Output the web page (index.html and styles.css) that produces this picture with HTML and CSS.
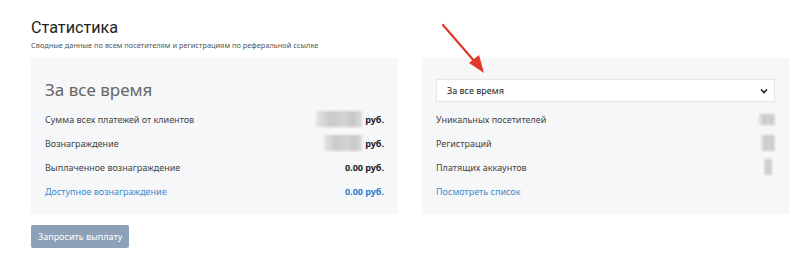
FILE: index.html
```html
<!DOCTYPE html>
<html lang="ru">
<head>
<meta charset="utf-8">
<link rel="stylesheet" href="styles.css">
</head>
<body>
<div class="page">
  <header class="head">
    <h1 class="title">Статистика</h1>
    <p class="subtitle">Сводные данные по всем посетителям и регистрациям по реферальной ссылке</p>
  </header>
  <div class="cards">
    <section class="card">
      <h2 class="card-title">За все время</h2>
      <div class="rows">
        <div class="row"><span>Сумма всех платежей от клиентов</span><span class="val"><i class="blur b1"></i>руб.</span></div>
        <div class="row"><span>Вознаграждение</span><span class="val"><i class="blur b2"></i>руб.</span></div>
        <div class="row"><span>Выплаченное вознаграждение</span><span class="val">0.00 руб.</span></div>
        <div class="row link"><span>Доступное вознаграждение</span><span class="val">0.00 руб.</span></div>
      </div>
    </section>
    <section class="card">
      <div class="select"><span>За все время</span>
        <svg class="chev" width="8" height="6" viewBox="0 0 8 6"><path d="M1 1.5 L4 4.5 L7 1.5" fill="none" stroke="#222" stroke-width="1.6"/></svg>
      </div>
      <div class="rows">
        <div class="row"><span>Уникальных посетителей</span><i class="blur r1"></i></div>
        <div class="row"><span>Регистраций</span><i class="blur r2"></i></div>
        <div class="row"><span>Платящих аккаунтов</span><i class="blur r3"></i></div>
        <div class="row link"><span>Посмотреть список</span></div>
      </div>
    </section>
  </div>
  <button class="btn">Запросить выплату</button>
  <svg class="arrow" width="807" height="263" viewBox="0 0 807 263">
    <line x1="443" y1="25" x2="475" y2="62" stroke="#e2372b" stroke-width="2.2" stroke-linecap="round"/>
    <polygon points="484,73 469,63 479,55" fill="#e2372b"/>
  </svg>
</div>
</body>
</html>
```
FILE: styles.css
```css
* { box-sizing: border-box; }
html, body { margin: 0; padding: 0; background: #fff; }
body { font-family: "Noto Sans", "Open Sans", sans-serif; color: #333; }
.page { position: relative; width: 807px; height: 263px; padding: 17px 0 0 31px; overflow: hidden; }
.head { height: 41px; }
.title { margin: 0; font-family: Roboto, "Noto Sans", sans-serif; font-size: 16.2px; font-weight: 400; color: #222; line-height: 22px; }
.subtitle { margin: 1px 0 0; font-size: 7.4px; color: #555; line-height: 11px; }
.cards { display: grid; grid-template-columns: 367px 367px; column-gap: 24px; }
.card { background: #f6f7f9; height: 156px; padding: 21px 14px 0 14px; }
.card-title { margin: 0; font-size: 17px; font-weight: 400; color: #666; line-height: 22px; height: 28px; }
.rows { display: flex; flex-direction: column; }
.row { display: flex; justify-content: space-between; align-items: center; height: 24px; font-size: 9px; color: #444; }
.row.link { color: #3b8ad0; }
.val { font-weight: 700; color: #222; display: flex; align-items: center; }
.row.link .val { color: #2b7fcb; }
.blur { display: inline-block; background: linear-gradient(90deg, #e6e6e6, #c9c9c9 30%, #d3d3d3 60%, #c7c7c7 80%, #dcdcdc); filter: blur(1px); }
.b1 { width: 46px; height: 16px; margin-right: 3px; }
.b2 { width: 38px; height: 16px; margin-right: 3px; }
.r1 { width: 16px; height: 11px; margin-right: 0; }
.r2 { width: 14px; height: 16px; margin-right: 0; }
.r3 { width: 8px; height: 16px; margin-right: 3px; }
.select { display: flex; justify-content: space-between; align-items: center; height: 23px; margin-bottom: 5px; background: #fff; border: 1px solid #e3e5e8; padding: 0 6px 0 10px; font-size: 9px; color: #222; }
.btn { margin-top: 11px; height: 23px; padding: 0 7px; border: 0; border-radius: 2px; background: #8ca1b7; color: #fff; font-family: "Noto Sans", "Open Sans", sans-serif; font-size: 9px; }
.arrow { position: absolute; left: 0; top: 0; pointer-events: none; }
```
